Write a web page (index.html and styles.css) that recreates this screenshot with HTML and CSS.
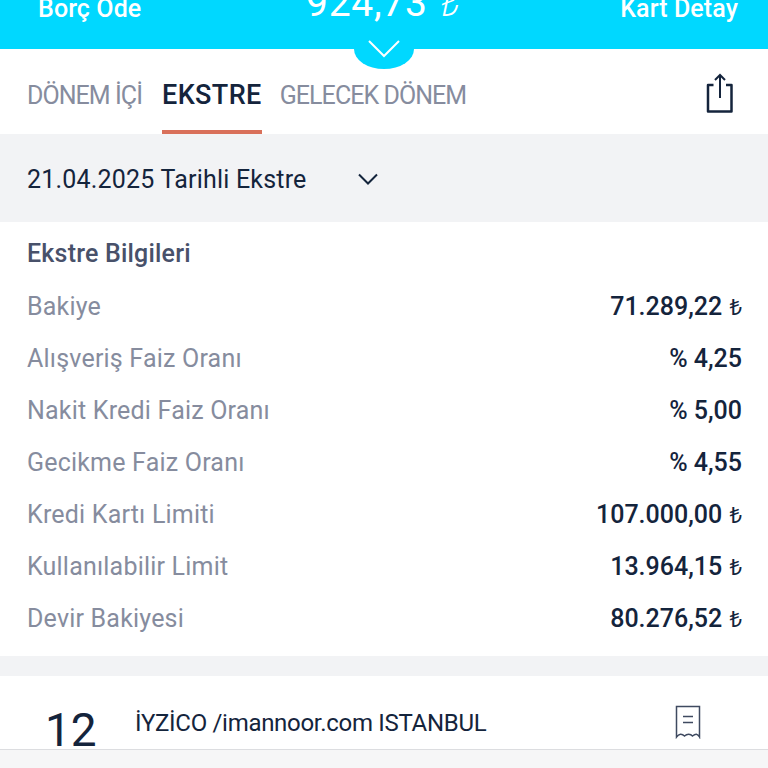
FILE: index.html
```html
<!DOCTYPE html>
<html lang="tr">
<head>
<meta charset="utf-8">
<title>Ekstre</title>
<link rel="stylesheet" href="styles.css">
</head>
<body>
<div class="page">
  <header class="top">
    <span class="top-link">Borç Öde</span>
    <span class="top-amount">924,73 <span class="lira-big">₺</span></span>
    <span class="top-link">Kart Detay</span>
    <div class="notch">
      <svg width="34" height="20" viewBox="0 0 34 20"><path d="M2 2 L17 17 L32 2" fill="none" stroke="#fff" stroke-width="2"/></svg>
    </div>
  </header>
  <nav class="tabs">
    <span class="tab">DÖNEM İÇİ</span>
    <span class="tab tab-active">EKSTRE</span>
    <span class="tab">GELECEK DÖNEM</span>
    <svg class="share" width="30" height="40" viewBox="0 0 30 40"><path d="M8.500 12 H3 V38.500 H26.500 V12 H21" fill="none" stroke="#14243c" stroke-width="2.500" stroke-linejoin="round"/><path d="M15 25 V2 M10 7 L15 2 L20 7" fill="none" stroke="#14243c" stroke-width="2"/></svg>
  </nav>
  <div class="period">
    <span class="period-label">21.04.2025 Tarihli Ekstre</span>
    <svg width="22" height="14" viewBox="0 0 22 14"><path d="M2 2.500 L11 11.500 L20 2.500" fill="none" stroke="#14243c" stroke-width="2"/></svg>
  </div>
  <section class="info">
    <h2 class="info-title">Ekstre Bilgileri</h2>
    <div class="row"><span class="row-key">Bakiye</span><span class="row-val">71.289,22 <span class="lira">₺</span></span></div>
    <div class="row"><span class="row-key">Alışveriş Faiz Oranı</span><span class="row-val">% 4,25</span></div>
    <div class="row"><span class="row-key">Nakit Kredi Faiz Oranı</span><span class="row-val">% 5,00</span></div>
    <div class="row"><span class="row-key">Gecikme Faiz Oranı</span><span class="row-val">% 4,55</span></div>
    <div class="row"><span class="row-key">Kredi Kartı Limiti</span><span class="row-val">107.000,00 <span class="lira">₺</span></span></div>
    <div class="row"><span class="row-key">Kullanılabilir Limit</span><span class="row-val">13.964,15 <span class="lira">₺</span></span></div>
    <div class="row"><span class="row-key">Devir Bakiyesi</span><span class="row-val">80.276,52 <span class="lira">₺</span></span></div>
  </section>
  <div class="gap"></div>
  <section class="tx">
    <span class="tx-day">12</span>
    <span class="tx-name">İYZİCO /imannoor.com ISTANBUL</span>
    <svg class="receipt" width="26" height="34" viewBox="0 0 26 34"><path d="M1.500 1.500 H24.500 V32 C22.500 28.500 20.500 28.500 17.500 31 C15.500 28.500 12 28.500 9.500 31 C7 28.500 4 28.500 1.500 32 Z" fill="none" stroke="#3f4a60" stroke-width="1.500"/><path d="M8 11.500 H18 M8 17.500 H18" stroke="#3f4a60" stroke-width="1.500"/></svg>
  </section>
  <div class="bottom"></div>
</div>
</body>
</html>
```

FILE: styles.css
```css
* { box-sizing: border-box; }
html, body { margin: 0; padding: 0; background: #fff; }
body { font-family: Roboto, "Noto Sans", sans-serif; color: #14243c; }
.page { width: 768px; height: 768px; overflow: hidden; display: flex; flex-direction: column; }

.top { position: relative; flex: 0 0 49px; background: #00d8ff; color: #fff; display: flex; justify-content: space-between; align-items: flex-start; padding: 0 30px 0 38px; }
.top-link { font-size: 25px; font-weight: 500; line-height: 20px; margin-top: -1px; letter-spacing: 0.1px; }
.top-amount { font-size: 39px; font-weight: 400; line-height: 28px; margin-top: -11px; letter-spacing: 0.7px; margin-left: 4px; }
.lira-big { font-family: "Noto Sans", sans-serif; font-style: italic; font-weight: 300; font-size: 34px; margin-left: 2px; }
.notch { position: absolute; left: 354px; top: 49px; width: 60px; height: 20px; background: #00d8ff; border-radius: 0 0 30px 30px / 0 0 20px 20px; }
.notch svg { position: absolute; left: 13px; top: -10px; }

.tabs { flex: 0 0 85px; display: flex; align-items: stretch; padding: 0 33px 0 27px; gap: 18px; }
.tab { font-size: 25px; line-height: 93px; height: 85px; color: #868c9e; letter-spacing: -0.95px; }
.tab-active { margin-left: 2px; font-size: 27px; letter-spacing: 0.4px; color: #14243c; font-weight: 500; border-bottom: 4px solid #d9705a; }
.share { margin-left: auto; align-self: center; margin-top: 3px; }

.period { flex: 0 0 88px; background: #f2f3f5; display: flex; align-items: center; padding: 2px 27px 0; gap: 50px; }
.period-label { font-size: 25px; letter-spacing: 0.2px; }

.info { flex: 0 0 434px; padding: 6px 26px 0 27px; letter-spacing: 0.2px; }
.info-title { margin: 0; font-size: 25px; font-weight: 500; color: #48516a; line-height: 52px; }
.row { display: flex; justify-content: space-between; align-items: center; height: 52px; }
.row-key { font-size: 25px; color: #868c9e; }
.row-val { font-size: 25px; font-weight: 500; color: #14243c; letter-spacing: 0; }
.lira { font-family: "Noto Sans", sans-serif; font-weight: 400; font-size: 22px; margin-left: 1px; }

.gap { flex: 0 0 20px; background: #f2f3f5; }

.tx { flex: 0 0 73px; display: flex; align-items: flex-start; padding-left: 45px; overflow: hidden; }
.tx-day { font-size: 46px; line-height: 54px; margin-top: 27px; width: 90px; }
.tx-name { font-size: 24px; line-height: 30px; margin-top: 32px; letter-spacing: -0.3px; }
.receipt { margin-left: auto; margin-right: 67px; margin-top: 29px; }

.bottom { flex: 0 0 19px; background: #f6f6f7; border-top: 1px solid #dcdde0; }
```
